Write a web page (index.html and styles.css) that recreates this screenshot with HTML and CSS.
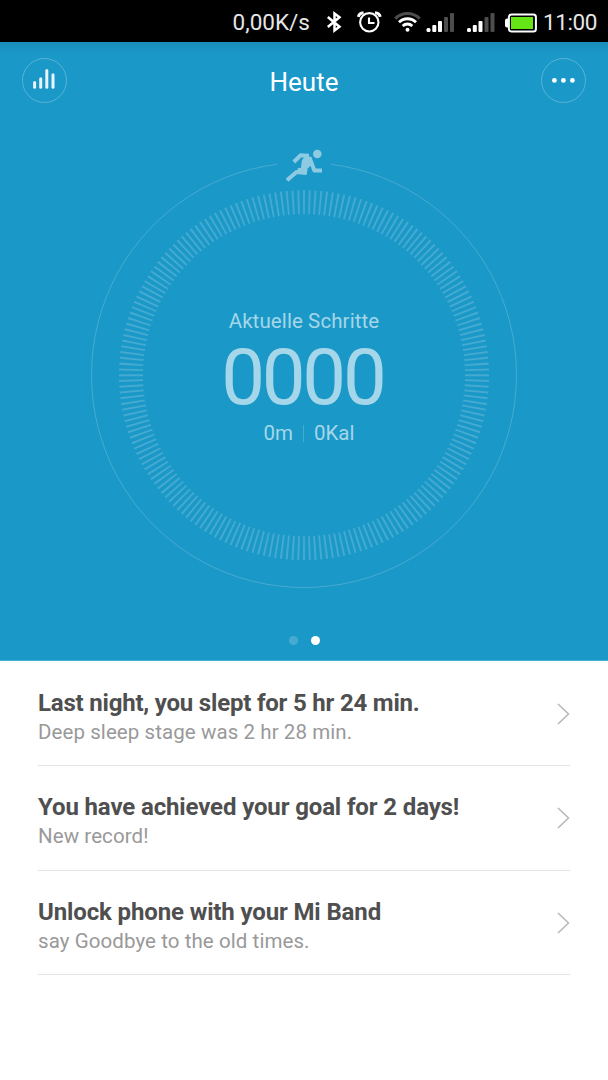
FILE: index.html
```html
<!DOCTYPE html>
<html lang="de">
<head>
    <meta charset="UTF-8">
    <meta name="viewport" content="width=device-width, initial-scale=1.0">
    <title>Heute</title>
    <link rel="stylesheet" href="styles.css">
</head>
<body>
    <div class="status-bar">
        <span class="net-speed">0,00K/s</span>
        <svg class="status-icons" width="218" height="42" viewBox="320 0 218 42">
            <!-- bluetooth -->
            <path d="M327.8 17 L339.5 26.8 L334.5 30.5 V13.5 L339.5 17.2 L327.8 27" fill="none" stroke="#fff" stroke-width="2.5"/>
            <!-- alarm -->
            <g fill="none" stroke="#fff" stroke-width="2.1">
                <circle cx="369.3" cy="22.3" r="9.2"/>
                <path d="M369 17.5 V23 H374.5"/>
                <path d="M358.4 16.8 Q359.2 13.2 363.6 12.8 M380.2 16.8 Q379.4 13.2 375 12.8" stroke-width="3"/>
            </g>
            <!-- wifi -->
            <g fill="none">
                <path d="M395.3 18.6 A17.2 17.2 0 0 1 419.7 18.6" stroke="#4d4d4d" stroke-width="3"/>
                <path d="M399 22.3 A12 12 0 0 1 416 22.3" stroke="#fff" stroke-width="2.8"/>
                <path d="M402.7 26 A6.8 6.8 0 0 1 412.3 26" stroke="#fff" stroke-width="2.8"/>
            </g>
            <circle cx="407.5" cy="29.8" r="2" fill="#fff"/>
            <!-- signal, sim 1 and sim 2 -->
            <g fill="#fff">
                <rect x="426.5" y="28" width="4" height="4" rx="1.5"/>
                <rect x="432.3" y="25" width="4" height="7" rx="1"/>
                <rect x="438" y="21" width="4" height="11" rx="1"/>
                <rect x="444" y="17" width="4" height="15" rx="1" fill="#4d4d4d"/>
                <rect x="450" y="13" width="4" height="19" rx="1" fill="#4d4d4d"/>
                <rect x="467" y="28" width="4" height="4" rx="1.5"/>
                <rect x="472.8" y="25" width="4" height="7" rx="1"/>
                <rect x="478.5" y="21" width="4" height="11" rx="1"/>
                <rect x="484.5" y="17" width="4" height="15" rx="1" fill="#4d4d4d"/>
                <rect x="490.5" y="13" width="4" height="19" rx="1" fill="#4d4d4d"/>
            </g>
            <!-- battery -->
            <rect x="505" y="18.5" width="5" height="9" rx="2" fill="#fff"/>
            <rect x="508.9" y="14.5" width="27" height="17" rx="2.5" fill="#000" stroke="#fff" stroke-width="2"/>
            <rect x="511" y="17" width="22" height="12" fill="#66e516"/>
        </svg>
        <span class="clock">11:00</span>
    </div>

    <div class="hero">
        <header>
            <div class="round-button">
                <svg width="45" height="45" viewBox="0 0 45 45">
                    <g stroke="#e9f3f8" stroke-width="3" stroke-linecap="round">
                        <path d="M12.6 24.5 V29.3"/>
                        <path d="M18.7 20.8 V29.3"/>
                        <path d="M24.8 12.6 V29.3"/>
                        <path d="M31 16.8 V29.3"/>
                    </g>
                </svg>
            </div>
            <h1>Heute</h1>
            <div class="round-button">
                <svg width="45" height="45" viewBox="0 0 45 45">
                    <g fill="#fff">
                        <circle cx="13.4" cy="22.4" r="2.4"/>
                        <circle cx="22.4" cy="22.4" r="2.4"/>
                        <circle cx="31.4" cy="22.4" r="2.4"/>
                    </g>
                </svg>
            </div>
        </header>

        <div class="dial">
            <svg class="ring" width="430" height="446" viewBox="89 144 430 446">
                <path d="M330.5 164.2 A212.5 212.5 0 1 1 277.5 164.2" fill="none" stroke="#47abd1" stroke-width="1"/>
                <circle cx="304" cy="375.2" r="173" fill="none" stroke="#44aad1" stroke-width="24" pathLength="200" stroke-dasharray="0.36 0.64" stroke-dashoffset="0.18"/>
                <!-- runner -->
                <g fill="none" stroke="#8ecbe3" stroke-width="4" stroke-linejoin="round">
                    <circle cx="317.3" cy="154" r="4.3" fill="#8ecbe3" stroke="none"/>
                    <path d="M293.8 162 L300.5 155.3 L309 155.8"/>
                    <path d="M309.5 157.5 L314.4 170.6 H322"/>
                    <path d="M287 180.2 L296.5 172 L306.5 173"/>
                    <path d="M305.5 156.5 L310 157.5 L312 163.5 L307 168 L306 173.5 L298.5 172 L298.5 168.5 L301.5 169 L302.5 161 Z" fill="#8ecbe3" stroke-width="1.5"/>
                </g>
            </svg>
            <div class="steps">
                <p class="label">Aktuelle Schritte</p>
                <p class="count">0000</p>
                <p class="totals"><span>0m</span><span class="divider"></span><span>0Kal</span></p>
            </div>
        </div>

        <div class="pager">
            <span class="dot"></span>
            <span class="dot active"></span>
        </div>
    </div>

    <ul class="feed">
        <li>
            <div>
                <h2 class="tight">Last night, you slept for 5 hr 24 min.</h2>
                <p>Deep sleep stage was 2 hr 28 min.</p>
            </div>
            <svg class="chevron" width="13" height="22" viewBox="0 0 13 22"><path d="M1 1 L11.5 11 L1 21" fill="none" stroke="#b9b9b9" stroke-width="1.6"/></svg>
        </li>
        <li>
            <div>
                <h2>You have achieved your goal for 2 days!</h2>
                <p>New record!</p>
            </div>
            <svg class="chevron" width="13" height="22" viewBox="0 0 13 22"><path d="M1 1 L11.5 11 L1 21" fill="none" stroke="#b9b9b9" stroke-width="1.6"/></svg>
        </li>
        <li>
            <div>
                <h2>Unlock phone with your Mi Band</h2>
                <p>say Goodbye to the old times.</p>
            </div>
            <svg class="chevron" width="13" height="22" viewBox="0 0 13 22"><path d="M1 1 L11.5 11 L1 21" fill="none" stroke="#b9b9b9" stroke-width="1.6"/></svg>
        </li>
    </ul>
</body>
</html>
```
FILE: styles.css
```css
* {
    margin: 0;
    padding: 0;
    box-sizing: border-box;
}

body {
    width: 608px;
    height: 1080px;
    overflow: hidden;
    background-color: #fff;
    font-family: Roboto, sans-serif;
}

.status-bar {
    display: flex;
    align-items: center;
    justify-content: flex-end;
    height: 42px;
    padding-right: 10px;
    background-color: #000;
    color: #e6e6e6;
    font-size: 22.5px;
    line-height: 42px;
    white-space: nowrap;
}

.status-icons {
    display: block;
    margin-left: 10px;
}

.net-speed,
.clock {
    padding-top: 2px;
}

.clock {
    width: 55px;
    margin-left: 5px;
    letter-spacing: -0.4px;
}

.hero {
    height: 619px;
    background: linear-gradient(#1a8dbb, #1a98c7 12px);
    border-bottom: 1px solid #43b0d8;
}

header {
    display: flex;
    justify-content: space-between;
    align-items: flex-start;
    height: 102px;
    padding: 16px 22px 0;
}

header h1 {
    color: #fff;
    font-size: 26px;
    font-weight: 400;
    line-height: 48px;
}

.round-button {
    width: 45px;
    height: 45px;
    border: 1px solid #58b4d7;
    border-radius: 50%;
}

.round-button svg {
    display: block;
    margin: -1px;
}

/* ring and step counter share one cell */
.dial {
    display: grid;
    justify-content: center;
    height: 446px;
}

.ring,
.steps {
    grid-area: 1 / 1;
}

.steps {
    padding-top: 163px;
    text-align: center;
    color: #a5d6e9;
}

.label {
    font-size: 20.5px;
    line-height: 28px;
    letter-spacing: 0.1px;
}

.count {
    height: 82px;
    font-size: 78px;
    line-height: 85px;
    letter-spacing: -3.3px;
    text-indent: -3.3px;
}

.totals {
    display: flex;
    justify-content: center;
    align-items: center;
    padding-left: 10px;
    font-size: 20.5px;
    line-height: 32px;
}

.divider {
    width: 1px;
    height: 17px;
    margin: 0 10px;
    background-color: #47abd1;
}

.pager {
    display: flex;
    justify-content: center;
    gap: 13px;
    padding-top: 46px;
}

.dot {
    width: 9px;
    height: 9px;
    border-radius: 50%;
    background-color: #47abd1;
}

.dot.active {
    background-color: #fff;
}

.feed {
    padding: 0.4px 38px 0;
    list-style: none;
}

.feed li {
    display: flex;
    justify-content: space-between;
    align-items: center;
    height: 104.6px;
    padding-top: 1px;
    border-bottom: 1px solid #e4e4e4;
}

.feed li > div {
    padding-top: 7px;
}

.feed h2 {
    color: #4f4f4f;
    font-size: 24px;
    font-weight: 700;
    line-height: 30px;
    letter-spacing: -0.13px;
}

.feed h2.tight {
    letter-spacing: -0.2px;
}

.feed p {
    color: #999;
    font-size: 20.5px;
    line-height: 29px;
    letter-spacing: 0.08px;
}
```
